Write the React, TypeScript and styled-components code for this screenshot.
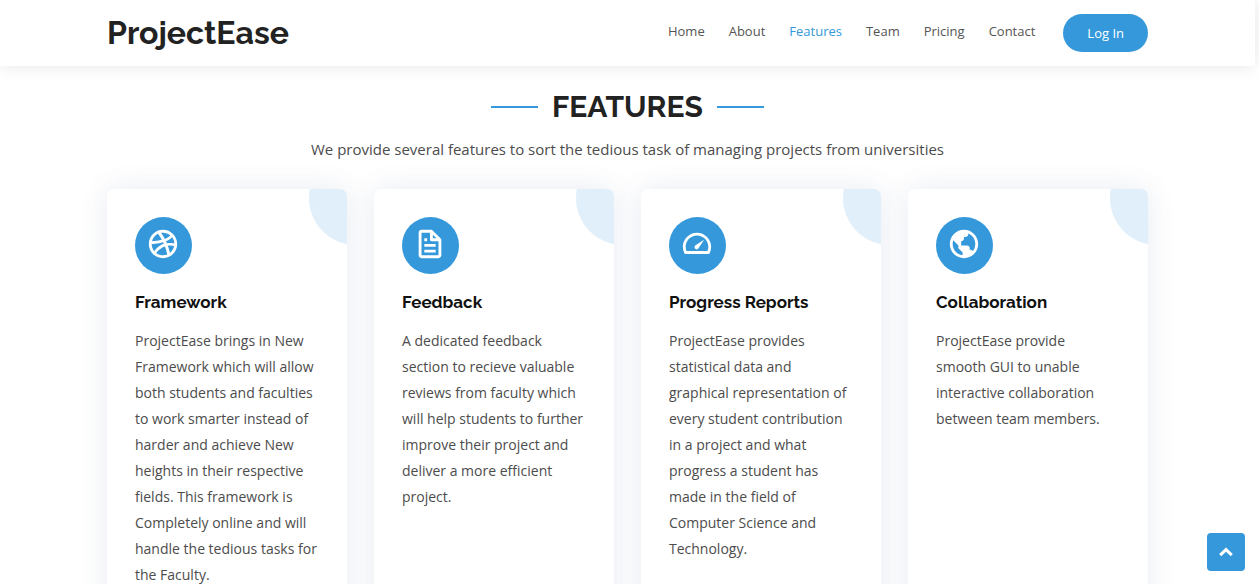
import React from "react";
import styled, { createGlobalStyle } from "styled-components";
import type { IconType } from "react-icons";
import { BiFile, BiTachometer, BiWorld } from "react-icons/bi";
import { RiDribbbleLine } from "react-icons/ri";

const blue = "#3498db";
const heading = `Raleway, Lato, "Liberation Sans", sans-serif`;

const GlobalStyle = createGlobalStyle`
  *, *::before, *::after { box-sizing: border-box; }
  html { overflow: hidden; }
  body {
    margin: 0;
    background: #fff;
    color: #4c4c4c;
    font-family: "Open Sans", "Liberation Sans", sans-serif;
  }
`;

const Page = styled.div`
  padding-right: 4px;
`;

const Container = styled.div`
  width: 100%;
  max-width: 1069px;
  margin: 0 auto;
  padding: 0 14px;
`;

const Header = styled.header`
  position: relative;
  z-index: 1;
  background: #fff;
  box-shadow: 0 0 16px rgba(0, 0, 0, 0.1);
`;

const HeaderRow = styled(Container)`
  display: flex;
  align-items: center;
  height: 66px;
`;

const Brand = styled.a`
  margin-right: auto;
  color: #222;
  font: 700 32px/40px ${heading};
  text-decoration: none;
`;

const Nav = styled.nav`
  display: flex;
  gap: 24px;
  padding-bottom: 4px;
`;

const NavLink = styled.a<{ $active?: boolean }>`
  color: ${(p) => (p.$active ? blue : "#555")};
  font-size: 13px;
  line-height: 20px;
  text-decoration: none;
`;

const LoginButton = styled.button`
  height: 38px;
  margin-left: 28px;
  padding: 0 24px;
  border: 0;
  border-radius: 19px;
  background: ${blue};
  color: #fff;
  font: 500 13px/20px "Open Sans", sans-serif;
`;

const SectionHead = styled.div`
  padding: 21px 0 28px;
  text-align: center;
`;

const SectionTitle = styled.h2`
  display: flex;
  align-items: center;
  justify-content: center;
  gap: 14px;
  margin: 0 0 11px;
  color: #222;
  font: 700 30px/40px ${heading};
  text-transform: uppercase;

  &::before,
  &::after {
    content: "";
    width: 47px;
    height: 2px;
    background: ${blue};
  }
`;

const SectionText = styled.p`
  margin: 0;
  font-size: 15px;
  line-height: 23px;
`;

const Cards = styled.div`
  display: grid;
  grid-template-columns: repeat(4, 1fr);
  gap: 27px;
`;

const Card = styled.article`
  position: relative;
  padding: 28px;
  border-radius: 7px;
  background: #fff;
  box-shadow: 0 0 28px rgba(68, 88, 144, 0.12);
`;

const Corner = styled.div`
  position: absolute;
  inset: 0;
  overflow: hidden;
  border-radius: 7px;

  &::before {
    content: "";
    position: absolute;
    top: -38px;
    right: -56px;
    width: 94px;
    height: 94px;
    border-radius: 50%;
    background: #e1effa;
  }
`;

const IconDisc = styled.div`
  display: flex;
  justify-content: center;
  width: 57px;
  height: 57px;
  padding: 10px 1px 0 0;
  border-radius: 50%;
  background: ${blue};
  color: #fff;
`;

const CardTitle = styled.h3`
  margin: 16px 0 14px;
  color: #111;
  font: 700 17px/24px ${heading};
`;

const CardText = styled.p`
  margin: 0;
  font-size: 14px;
  line-height: 26px;
`;

const BackToTop = styled.a`
  position: fixed;
  right: 14px;
  bottom: 13px;
  z-index: 2;
  display: flex;
  align-items: center;
  justify-content: center;
  width: 38px;
  height: 38px;
  border-radius: 4px;
  background: ${blue};
`;

const links = ["Home", "About", "Features", "Team", "Pricing", "Contact"];

const features: { title: string; text: string; Icon: IconType }[] = [
  {
    title: "Framework",
    Icon: RiDribbbleLine,
    text: "ProjectEase brings in New Framework which will allow both students and faculties to work smarter instead of harder and achieve New heights in their respective fields. This framework is Completely online and will handle the tedious tasks for the Faculty.",
  },
  {
    title: "Feedback",
    Icon: BiFile,
    text: "A dedicated feedback section to recieve valuable reviews from faculty which will help students to further improve their project and deliver a more efficient project.",
  },
  {
    title: "Progress Reports",
    Icon: BiTachometer,
    text: "ProjectEase provides statistical data and graphical representation of every student contribution in a project and what progress a student has made in the field of Computer Science and Technology.",
  },
  {
    title: "Collaboration",
    Icon: BiWorld,
    text: "ProjectEase provide smooth\u00a0GUI to\u00a0unable interactive collaboration between team members.",
  },
];

export default function App() {
  return (
    <Page id="top">
      <GlobalStyle />
      <Header>
        <HeaderRow>
          <Brand href="#top">ProjectEase</Brand>
          <Nav>
            {links.map((label) => (
              <NavLink key={label} href={`#${label.toLowerCase()}`} $active={label === "Features"}>
                {label}
              </NavLink>
            ))}
          </Nav>
          <LoginButton type="button">Log In</LoginButton>
        </HeaderRow>
      </Header>
      <Container as="main" id="features">
        <SectionHead>
          <SectionTitle>Features</SectionTitle>
          <SectionText>
            We provide several features to sort the tedious task of managing projects from universities
          </SectionText>
        </SectionHead>
        <Cards>
          {features.map(({ title, text, Icon }) => (
            <Card key={title}>
              <Corner />
              <IconDisc>
                <Icon size={34} aria-hidden />
              </IconDisc>
              <CardTitle>{title}</CardTitle>
              <CardText>{text}</CardText>
            </Card>
          ))}
        </Cards>
      </Container>
      <BackToTop href="#top" aria-label="Back to top">
        <svg width="14" height="10" viewBox="0 0 14 10" fill="none" stroke="#fff" strokeWidth="3">
          <path d="M1.2 8.2 7 2.6l5.800 5.600" />
        </svg>
      </BackToTop>
    </Page>
  );
}
